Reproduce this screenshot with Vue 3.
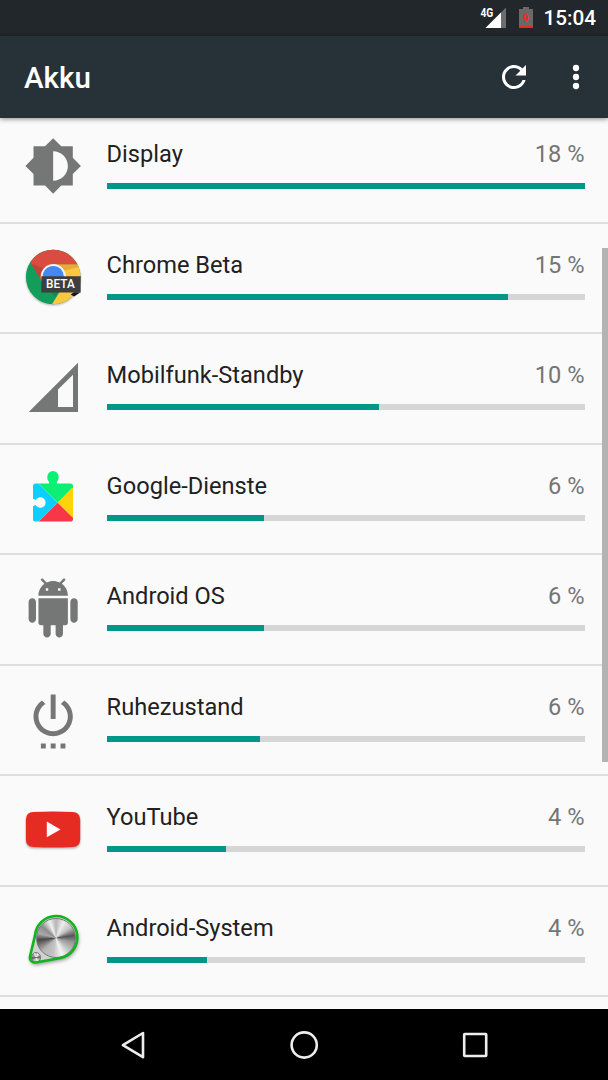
<template>
  <div class="screen">
    <div class="status-bar">
      <svg class="signal" width="30" height="36" viewBox="0 0 30 36">
        <text x="0.4" y="16.8" textLength="12.8" lengthAdjust="spacingAndGlyphs">4G</text>
        <path d="M26 7.5V28H5.5z" fill="#6b6e70" />
        <path d="M21 12.5V28H5.5z" fill="#fff" />
      </svg>
      <svg class="battery" width="14" height="36" viewBox="0 0 14 36">
        <path d="M4 7h6v2h4v19H0V9h4z" fill="#6b6968" />
        <path d="M0 26h14v2H0z" fill="#e02d20" />
        <text x="7" y="21.5" text-anchor="middle">9</text>
      </svg>
      <span class="clock">15:04</span>
    </div>

    <header class="toolbar">
      <h1>Akku</h1>
      <button class="refresh" aria-label="Aktualisieren">
        <svg width="36" height="36" viewBox="0 0 24 24">
          <path d="M17.65 6.35C16.2 4.9 14.21 4 12 4c-4.42 0-7.99 3.58-7.99 8s3.57 8 7.99 8c3.73 0 6.84-2.55 7.73-6h-2.08c-.82 2.33-3.04 4-5.65 4-3.31 0-6-2.69-6-6s2.69-6 6-6c1.66 0 3.14.69 4.22 1.78L13 11h7V4l-2.35 2.35z" />
        </svg>
      </button>
      <button aria-label="Mehr">
        <svg width="36" height="36" viewBox="0 0 24 24">
          <circle cx="12" cy="6" r="2.1" />
          <circle cx="12" cy="12" r="2.1" />
          <circle cx="12" cy="18" r="2.1" />
        </svg>
      </button>
    </header>

    <main class="content">
      <ul class="list">
        <li v-for="app in apps" :key="app.name" class="row">
          <svg class="icon" width="66" height="66" viewBox="0 0 66 66">
            <g v-if="paths[app.icon]" transform="translate(3.7 3.5) scale(2.455)">
              <path :d="paths[app.icon]" fill="#757776" />
            </g>

            <g v-else-if="app.icon === 'chrome'">
              <defs>
                <clipPath id="chromeClip"><circle cx="33.2" cy="33" r="27.3" /></clipPath>
              </defs>
              <circle class="soft" cx="33.2" cy="34" r="27.3" />
              <g clip-path="url(#chromeClip)">
                <path d="M0 0h66v66H0z" fill="#129d5a" />
                <path d="M33 20.5h33V66H28.5L45 39z" fill="#fdc83f" />
                <path d="M9 16L0 0h66v20.5H33L22.3 38z" fill="#d94c3f" />
                <path d="M33 20.5h28v2l-20 5z" fill="#e9a936" />
                <path d="M11 19.5l11.5 19 4-13z" fill="#bd4438" />
                <path d="M23 40l12 13 6-9z" fill="#138a4e" />
              </g>
              <circle cx="33.3" cy="32.6" r="12.6" fill="#f3f3f3" />
              <circle cx="33.3" cy="32.6" r="10.6" fill="#4688f1" />
              <path d="M54 48.3h6.6l-6.5 4.2-3.5-2z" fill="#171717" />
              <path d="M21.3 32.3h39.4v16.2H21.3z" fill="#3d3e40" />
              <text class="beta" x="40.4" y="44.3" text-anchor="middle" textLength="28.6" lengthAdjust="spacingAndGlyphs">BETA</text>
            </g>

            <path
              v-else-if="app.icon === 'mobile'"
              d="M58 8.7V58H8.7zM53 20.7L38 35.5V53h15z"
              fill="#757776"
              fill-rule="evenodd"
            />

            <g v-else-if="app.icon === 'play'">
              <defs>
                <clipPath id="playClip"><rect x="13" y="18.5" width="40" height="38" rx="2.6" /></clipPath>
              </defs>
              <g clip-path="url(#playClip)">
                <path d="M13 13.2v48.6l24.7-24z" fill="#0ccfff" />
                <path d="M13 13.2l24.7 24.6L62 13.2z" fill="#0bef75" />
                <path d="M57 18.2L37.7 37.8 57 57.4z" fill="#ffd20a" />
                <path d="M12 63l25.7-25.2L62 62z" fill="#f73648" />
              </g>
              <path d="M29 19v-2.2c-1.2-1.2-1.8-3-1.7-5.1a5.7 5.7 0 0 1 11.4 0c0 2.1-.6 3.9-1.8 5.1V19z" fill="#0bef75" />
              <path d="M12.5 33.5l3.2 1.4a5.3 5.3 0 1 1 0 5.2l-3.2 1.4z" fill="#fafafa" />
            </g>

            <g v-else-if="app.icon === 'youtube'">
              <rect class="soft" x="6" y="17" width="54.2" height="35.6" rx="7" />
              <path d="M13.5 15.9Q33 14.9 52.5 15.9Q60 16.3 60.2 23.5V43.5Q60 50.7 52.5 51.1Q33 52.1 13.5 51.1Q6 50.7 5.9 43.5V23.5Q6 16.3 13.5 15.9z" fill="#e62b22" />
              <path d="M26.8 25.5v15.7l13.7-7.8z" fill="#fff" />
            </g>

            <g v-else>
              <path class="soft strong" :d="dialShape" transform="translate(.8 2)" />
              <path :d="dialShape" fill="#d2d2d2" />
              <foreignObject x="16.3" y="11.2" width="40" height="40">
                <div class="dial"></div>
              </foreignObject>
              <foreignObject x="10.8" y="45.2" width="10.4" height="10.4">
                <div class="dial small"></div>
              </foreignObject>
              <path :d="dialShape" fill="none" stroke="#10b41c" stroke-width="2.6" />
            </g>
          </svg>

          <div class="info">
            <div class="labels">
              <span class="name">{{ app.name }}</span>
              <span class="percent">{{ app.percent }} %</span>
            </div>
            <div class="track">
              <div class="fill" :style="{ width: app.bar + '%' }"></div>
            </div>
          </div>
        </li>
      </ul>
      <div class="scrollbar"></div>
    </main>

    <nav class="nav-bar">
      <svg width="36" height="36" viewBox="0 0 36 36">
        <path d="M28 6v24.2L7.9 18.1z" />
      </svg>
      <svg width="36" height="36" viewBox="0 0 36 36">
        <circle cx="18.2" cy="18" r="12.6" />
      </svg>
      <svg width="36" height="36" viewBox="0 0 36 36">
        <rect x="7.2" y="7" width="22" height="22" rx=".5" />
      </svg>
    </nav>
  </div>
</template>

<script setup>
const apps = [
  { name: 'Display', percent: 18, bar: 100, icon: 'display' },
  { name: 'Chrome Beta', percent: 15, bar: 84, icon: 'chrome' },
  { name: 'Mobilfunk-Standby', percent: 10, bar: 57, icon: 'mobile' },
  { name: 'Google-Dienste', percent: 6, bar: 33, icon: 'play' },
  { name: 'Android OS', percent: 6, bar: 33, icon: 'android' },
  { name: 'Ruhezustand', percent: 6, bar: 32, icon: 'power' },
  { name: 'YouTube', percent: 4, bar: 25, icon: 'youtube' },
  { name: 'Android-System', percent: 4, bar: 21, icon: 'dial' },
]

// single colour icons, 24x24
const paths = {
  display:
    'M20 15.31L23.31 12 20 8.69V4h-4.69L12 .69 8.69 4H4v4.69L.69 12 4 15.31V20h4.69L12 23.31 15.31 20H20v-4.69zM12 18V6c3.31 0 6 2.69 6 6s-2.69 6-6 6z',
  android:
    'M6 18c0 .55.45 1 1 1h1v3.5c0 .83.67 1.5 1.5 1.5s1.5-.67 1.5-1.5V19h2v3.5c0 .83.67 1.5 1.5 1.5s1.5-.67 1.5-1.5V19h1c.55 0 1-.45 1-1V8H6v10zM3.5 8C2.67 8 2 8.67 2 9.5v7c0 .83.67 1.5 1.5 1.5S5 17.33 5 16.5v-7C5 8.67 4.33 8 3.5 8zm17 0c-.83 0-1.5.67-1.5 1.5v7c0 .83.67 1.5 1.5 1.5s1.5-.67 1.5-1.5v-7c0-.83-.67-1.5-1.5-1.5zm-4.97-5.84l1.3-1.3c.2-.2.2-.51 0-.71-.2-.2-.51-.2-.71 0l-1.48 1.48C13.85 1.23 12.95 1 12 1c-.96 0-1.86.23-2.66.63L7.85.15c-.2-.2-.51-.2-.71 0-.2.2-.2.51 0 .71l1.31 1.31C6.97 3.26 6 5.01 6 7h12c0-1.99-.97-3.75-2.47-4.84zM10 5H9V4h1v1zm5 0h-1V4h1v1z',
  power:
    'M7 24h2v-2H7v2zm4 0h2v-2h-2v2zm2-22h-2v10h2V2zm3.56 2.44l-1.45 1.45C16.84 6.94 18 8.83 18 11c0 3.31-2.69 6-6 6s-6-2.69-6-6c0-2.17 1.16-4.06 2.88-5.12L7.44 4.44C5.36 5.88 4 8.28 4 11c0 4.42 3.58 8 8 8s8-3.58 8-8c0-2.72-1.36-5.12-3.44-6.56zM15 24h2v-2h-2v2z',
}

const dialShape =
  'M15 28.5A21.2 21.2 0 1 1 40.5 51L17 55.3C12.5 56 9.2 53.5 10 49.5z'
</script>

<style>
body {
  margin: 0;
  background: #fafafa;
}
</style>

<style scoped>
.screen {
  display: flex;
  flex-direction: column;
  width: 608px;
  height: 1080px;
  overflow: hidden;
  background: #fafafa;
  font-family: Roboto, "Noto Sans", sans-serif;
}

.status-bar {
  display: flex;
  align-items: center;
  justify-content: flex-end;
  height: 36px;
  flex-shrink: 0;
  padding-right: 12px;
  background: #21272b;
  color: #fff;
}

.signal {
  margin-right: 9px;
}

.signal text {
  font-size: 12.5px;
  font-weight: 700;
  fill: #fff;
}

.battery {
  margin-right: 11px;
}

.battery text {
  font-size: 11px;
  font-weight: 700;
  fill: #f4281c;
}

.clock {
  font-size: 20.7px;
  font-weight: 500;
  line-height: 36px;
}

.toolbar {
  position: relative;
  z-index: 1;
  display: flex;
  align-items: center;
  height: 82px;
  flex-shrink: 0;
  padding: 0 14.5px 0 24px;
  background: #263238;
  box-shadow: 0 1px 5px rgba(0, 0, 0, 0.45);
}

h1 {
  flex: 1;
  margin: 2px 0 0;
  color: #fff;
  font-size: 29.56px;
  font-weight: 500;
}

button {
  display: flex;
  padding: 0;
  border: none;
  background: none;
  cursor: pointer;
}

button svg {
  fill: #fff;
}

.refresh {
  margin-right: 26px;
}

.content {
  position: relative;
  flex: 1;
  min-height: 0;
  overflow: hidden;
}

.list {
  margin: -5px 0 0;
  padding: 0;
  list-style: none;
}

.row {
  display: flex;
  box-sizing: border-box;
  height: 110.54px;
  padding: 20px 23.5px 0 20px;
  border-bottom: 2px solid #dedede;
}

.icon {
  flex-shrink: 0;
  margin-right: 20.6px;
}

.soft {
  fill: #000;
  opacity: 0.3;
  filter: blur(1.2px);
}

.strong {
  opacity: 0.5;
  filter: blur(2px);
}

.beta {
  font-size: 12.2px;
  font-weight: 500;
  fill: #fff;
}

.dial {
  box-sizing: border-box;
  width: 40px;
  height: 40px;
  border: 1.5px solid #777;
  border-radius: 50%;
  background: conic-gradient(#b5b5b5, #ececec 25deg, #c2c2c2 55deg, #555 82deg, #999 105deg, #bdbdbd 130deg, #f4f4f4 160deg, #c4c4c4 190deg, #b5b5b5 225deg, #484848 264deg, #aaa 285deg, #8c8c8c 310deg, #f1f1f1 338deg, #b5b5b5);
}

.small {
  width: 10.4px;
  height: 10.4px;
}

.info {
  flex: 1;
}

.labels {
  display: flex;
  justify-content: space-between;
  height: 50.1px;
  font-size: 23.64px;
  line-height: 42px;
}

.name {
  color: #212121;
}

.percent {
  color: #757575;
}

.track {
  height: 6px;
  background: #d6d6d6;
}

.fill {
  height: 6px;
  background: #009688;
}

.scrollbar {
  position: absolute;
  top: 130px;
  right: 0;
  width: 6px;
  height: 513.5px;
  background: #b3b3b3;
}

.nav-bar {
  display: flex;
  align-items: center;
  justify-content: center;
  gap: 135px;
  height: 71px;
  flex-shrink: 0;
  background: #000;
}

.nav-bar svg {
  fill: none;
  stroke: #ededed;
  stroke-width: 2.6;
  stroke-linejoin: round;
}
</style>
